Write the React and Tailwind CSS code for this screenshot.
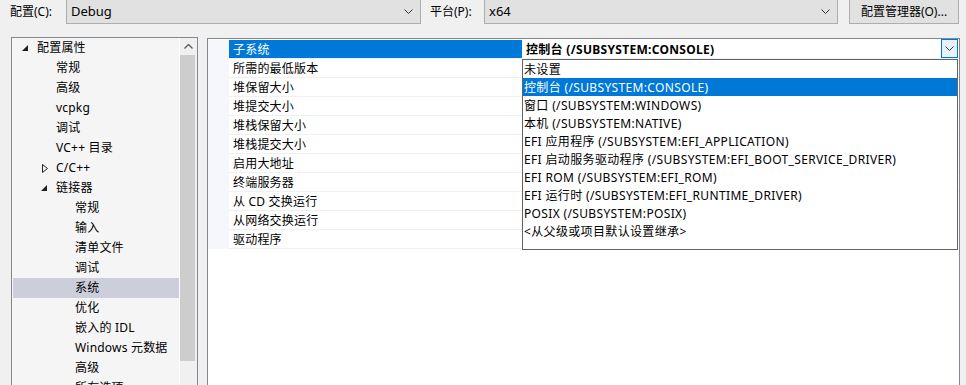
import React from "react";

const tree = [
  { label: "配置属性", level: 0, arrow: "open" },
  { label: "常规", level: 1 },
  { label: "高级", level: 1 },
  { label: "vcpkg", level: 1 },
  { label: "调试", level: 1 },
  { label: "VC++ 目录", level: 1 },
  { label: "C/C++", level: 1, arrow: "closed" },
  { label: "链接器", level: 1, arrow: "open" },
  { label: "常规", level: 2 },
  { label: "输入", level: 2 },
  { label: "清单文件", level: 2 },
  { label: "调试", level: 2 },
  { label: "系统", level: 2, selected: true },
  { label: "优化", level: 2 },
  { label: "嵌入的 IDL", level: 2 },
  { label: "Windows 元数据", level: 2 },
  { label: "高级", level: 2 },
  { label: "所有选项", level: 2 },
];

const props = [
  "子系统",
  "所需的最低版本",
  "堆保留大小",
  "堆提交大小",
  "堆栈保留大小",
  "堆栈提交大小",
  "启用大地址",
  "终端服务器",
  "从 CD 交换运行",
  "从网络交换运行",
  "驱动程序",
];

const options = [
  "未设置",
  "控制台 (/SUBSYSTEM:CONSOLE)",
  "窗口 (/SUBSYSTEM:WINDOWS)",
  "本机 (/SUBSYSTEM:NATIVE)",
  "EFI 应用程序 (/SUBSYSTEM:EFI_APPLICATION)",
  "EFI 启动服务驱动程序 (/SUBSYSTEM:EFI_BOOT_SERVICE_DRIVER)",
  "EFI ROM (/SUBSYSTEM:EFI_ROM)",
  "EFI 运行时 (/SUBSYSTEM:EFI_RUNTIME_DRIVER)",
  "POSIX (/SUBSYSTEM:POSIX)",
  "<从父级或项目默认设置继承>",
];

const Chevron = ({ className = "" }) => (
  <svg width="9" height="5" viewBox="0 0 9 5" className={className}>
    <path d="M0.5 0.5 L4.5 4.5 L8.5 0.5" fill="none" stroke="#333" strokeWidth="1" />
  </svg>
);

const Arrow = ({ type }) =>
  type === "open" ? (
    <svg width="6" height="6" viewBox="0 0 6 6">
      <polygon points="6,0 6,6 0,6" fill="#1e1e1e" />
    </svg>
  ) : (
    <svg width="6" height="9" viewBox="0 0 6 9">
      <polygon points="0.5,0.5 5.5,4.5 0.5,8.5" fill="none" stroke="#1e1e1e" strokeWidth="1" />
    </svg>
  );

const Combo = ({ value, width }) => (
  <div
    className={`${width} -mt-px h-[25px] border border-[#adadad] bg-[#e1e1e1] flex items-center justify-between pl-[4px] pr-[7px]`}
  >
    <span className="text-[13px]">{value}</span>
    <Chevron />
  </div>
);

export default function App() {
  const font = { fontFamily: '"Noto Sans", "Noto Sans CJK SC", sans-serif' };
  return (
    <div className="w-[966px] h-[385px] overflow-hidden bg-[#f0f0f0] text-black text-[12px] leading-none" style={font}>
      <div className="h-[37px] flex items-start">
        <div className="ml-[10px] w-[56px] h-[24px] flex items-center text-[12px]">配置(C):</div>
        <Combo value="Debug" width="w-[355px]" />
        <div className="ml-[9px] w-[54px] h-[24px] flex items-center">平台(P):</div>
        <Combo value="x64" width="w-[354px]" />
        <div className="ml-[11px] -mt-px w-[110px] h-[25px] border border-[#adadad] bg-[#e1e1e1] flex items-center justify-center">
          配置管理器(O)...
        </div>
      </div>

      <div className="flex">
        <div className="ml-[11px] w-[187px] h-[360px] border border-[#828790] bg-[#f5f5f5] flex">
          <div className="flex-1 pl-px">
            {tree.map((t, i) => (
              <div
                key={i}
                className={`h-[20px] flex items-center relative ${t.selected ? "bg-[#cccedb]" : ""}`}
                style={{ paddingLeft: 24 + t.level * 19 }}
              >
                {t.arrow && (
                  <span
                    className="absolute flex items-center"
                    style={{ left: 9 + t.level * 19 + (t.arrow === "closed" ? 1 : 0) }}
                  >
                    <Arrow type={t.arrow} />
                  </span>
                )}
                <span className="tracking-[0.2px]">{t.label}</span>
              </div>
            ))}
          </div>
          <div className="w-[18px] border-l border-white bg-[#f0f0f0] flex flex-col">
            <div className="h-[17px] flex items-center justify-center">
              <svg width="9" height="5" viewBox="0 0 9 5">
                <path d="M0.5 4.5 L4.5 0.5 L8.5 4.5" fill="none" stroke="#606060" strokeWidth="1.4" />
              </svg>
            </div>
            <div className="w-[15px] h-[306px] bg-[#cdcdcd]" />
          </div>
        </div>

        <div className="ml-[9px] mr-[6px] mt-px flex-1 h-[360px] border border-[#828790] bg-white relative pt-px">
          {props.map((p, i) => (
            <div key={i} className="flex h-[19px]">
              <div className="w-[21px] bg-[#f5f7fc]" />
              <div
                className={`w-[293px] flex items-center pl-[4px] pt-px tracking-[0.2px] border-b border-[#f0f0f0] ${
                  i === 0 ? "bg-[#0078d7] text-white border-[#0078d7]" : ""
                }`}
              >
                {p}
              </div>
              <div className="flex-1 flex items-center border-b border-[#f0f0f0]">
                {i === 0 && (
                  <>
                    <span className="pl-[4px] pt-px font-bold flex-1 tracking-[0.3px]">控制台 (/SUBSYSTEM:CONSOLE)</span>
                    <div className="w-[17px] h-[19px] -mt-px mr-px border border-[#0078d7] bg-[#e5f1fb] flex items-center justify-center">
                      <Chevron />
                    </div>
                  </>
                )}
              </div>
            </div>
          ))}

          <div className="absolute left-[314px] top-[20px] w-[436px] h-[191px] border border-[#646464] bg-white">
            {options.map((o, i) => (
              <div
                key={i}
                className={`h-[18px] flex items-center pl-[1px] pt-px tracking-[0.35px] ${i === 1 ? "bg-[#0078d7] text-white" : ""}`}
              >
                {o}
              </div>
            ))}
          </div>
        </div>
      </div>
    </div>
  );
}
